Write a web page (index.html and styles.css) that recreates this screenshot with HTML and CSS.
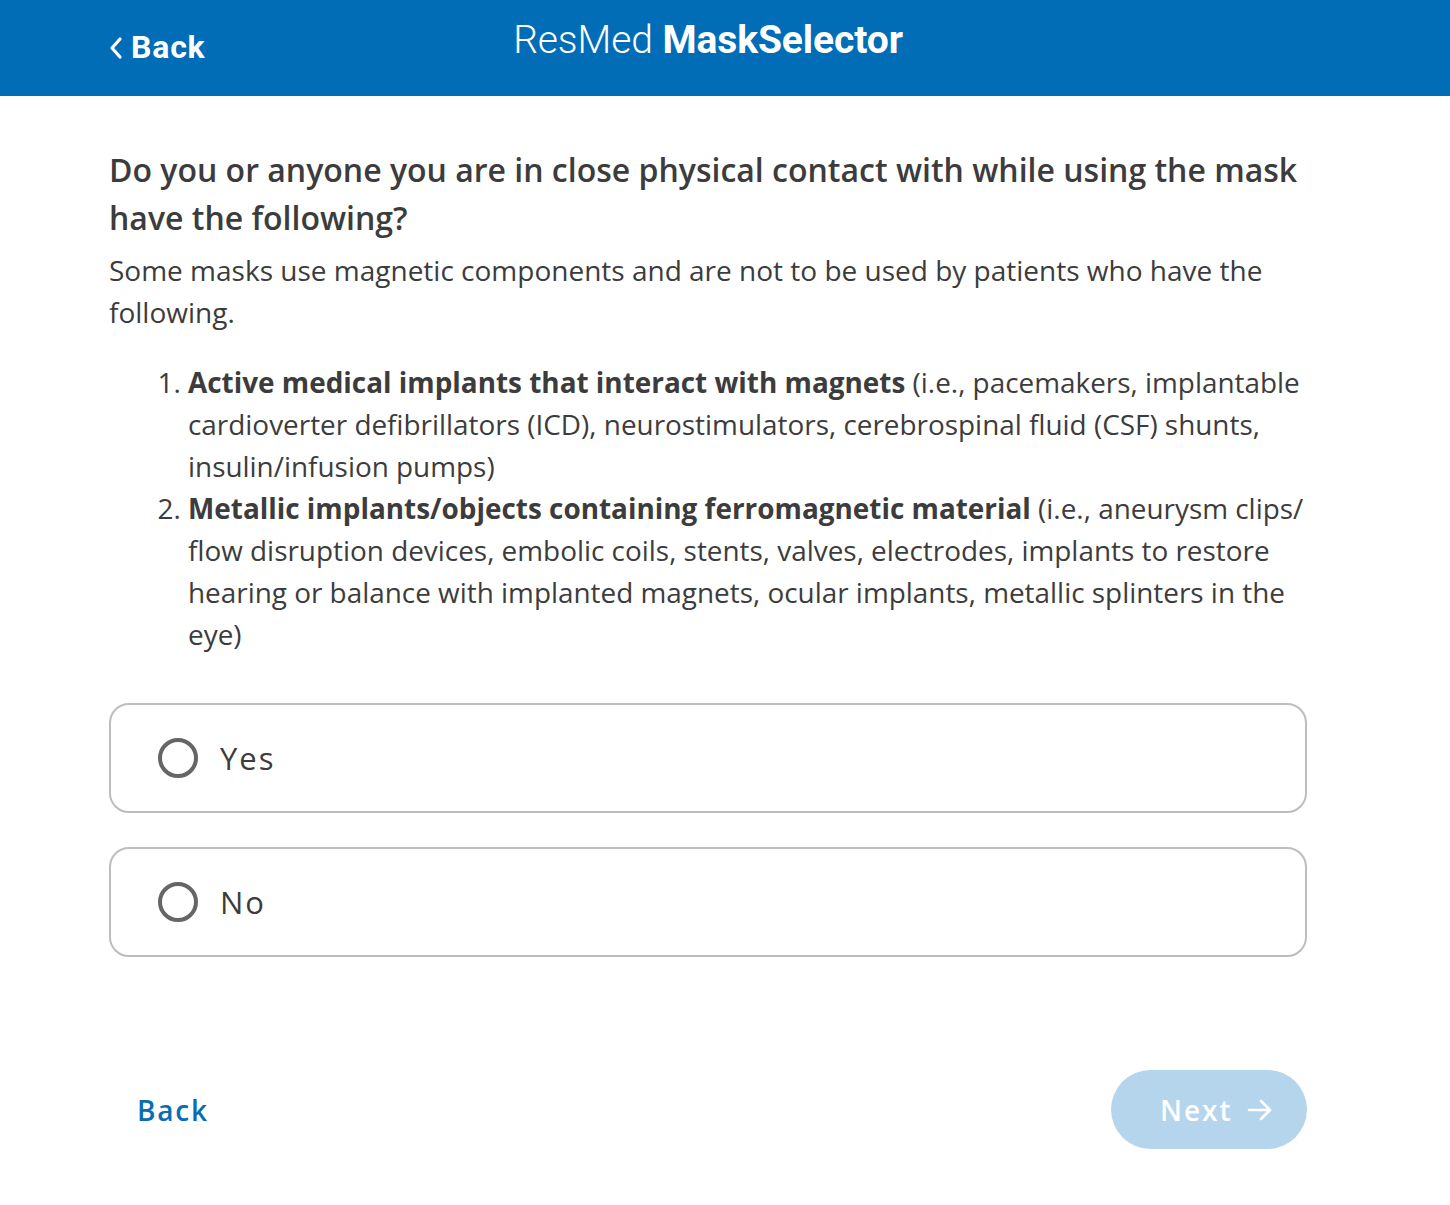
FILE: index.html
```html
<!DOCTYPE html>
<html lang="en">
<head>
<meta charset="utf-8">
<title>ResMed MaskSelector</title>
<link rel="stylesheet" href="styles.css">
</head>
<body>
<header class="topbar">
  <div class="topbar-inner">
    <a class="top-back" href="#">
      <svg class="chev" width="14" height="24" viewBox="0 0 14 24"><path d="M11 3 L3 12 L11 21" fill="none" stroke="#fff" stroke-width="3.2" stroke-linecap="round" stroke-linejoin="round"/></svg>
      <span>Back</span>
    </a>
    <div class="brand"><span class="brand-light">ResMed</span> <span class="brand-bold">MaskSelector</span></div>
  </div>
</header>
<main class="content">
  <h1 class="question">Do you or anyone you are in close physical contact with while using the mask have the following?</h1>
  <p class="intro">Some masks use magnetic components and are not to be used by patients who have the following.</p>
  <ol class="conditions">
    <li><strong>Active medical implants that interact with magnets</strong> (i.e., pacemakers, implantable cardioverter defibrillators (ICD), neurostimulators, cerebrospinal fluid (CSF) shunts, insulin/infusion pumps)</li>
    <li><strong>Metallic implants/objects containing ferromagnetic material</strong> (i.e., aneurysm clips/ flow disruption devices, embolic coils, stents, valves, electrodes, implants to restore hearing or balance with implanted magnets, ocular implants, metallic splinters in the eye)</li>
  </ol>
  <div class="options">
    <label class="option"><span class="radio"></span><span class="opt-label">Yes</span></label>
    <label class="option"><span class="radio"></span><span class="opt-label">No</span></label>
  </div>
  <div class="nav">
    <a class="nav-back" href="#">Back</a>
    <button class="next" type="button">Next
      <svg width="26" height="22" viewBox="0 0 26 22"><path d="M2 11 H23 M14 2 L23 11 L14 20" fill="none" stroke="#fff" stroke-width="2.6" stroke-linecap="round" stroke-linejoin="round"/></svg>
    </button>
  </div>
</main>
</body>
</html>
```
FILE: styles.css
```css
* { box-sizing: border-box; }
body {
  margin: 0;
  background: #fff;
  font-family: "Open Sans", "Noto Sans", sans-serif;
  color: #3c3c3c;
}
.topbar {
  background: #006db6;
  height: 96px;
}
.topbar-inner {
  width: 1198px;
  margin-left: 109px;
  height: 96px;
  position: relative;
  display: flex;
  align-items: center;
  justify-content: center;
}
.top-back {
  position: absolute;
  left: 0;
  top: 29px;
  display: flex;
  align-items: center;
  gap: 8px;
  color: #fff;
  text-decoration: none;
  font-family: Roboto, sans-serif;
  font-weight: 700;
  font-size: 32px;
  line-height: 36px;
  letter-spacing: 0.8px;
}
.chev { display: block; margin-top: 1px; }
.brand {
  color: #fff;
  font-family: Roboto, sans-serif;
  font-size: 39px;
  line-height: 40px;
  margin-top: -16px;
  letter-spacing: -0.1px;
}
.brand-light { font-weight: 300; }
.brand-bold { font-weight: 700; }
.content {
  width: 1198px;
  margin-left: 109px;
  padding-top: 50px;
}
.question {
  margin: 0;
  font-size: 32px;
  line-height: 48px;
  font-weight: 600;
  color: #3c3c3c;
}
.intro {
  margin: 7px 0 0;
  font-size: 28px;
  line-height: 42px;
}
.conditions {
  margin: 28px 0 0;
  padding-left: 79px;
  font-size: 27.9px;
  line-height: 42px;
}
.conditions strong { font-weight: 700; }
.options {
  margin-top: 48px;
  display: flex;
  flex-direction: column;
  gap: 34px;
}
.option {
  height: 110px;
  border: 2px solid #bdbdbd;
  border-radius: 20px;
  display: flex;
  align-items: center;
  padding-left: 47px;
}
.radio {
  width: 40px;
  height: 40px;
  border: 4px solid #666;
  border-radius: 50%;
  flex: none;
}
.opt-label {
  margin-left: 22px;
  font-size: 31px;
  letter-spacing: 2px;
  color: #3c3c3c;
}
.nav {
  margin-top: 113px;
  display: flex;
  justify-content: space-between;
  align-items: center;
}
.nav-back {
  margin-left: 28px;
  color: #0a6db4;
  font-size: 28px;
  font-weight: 600;
  letter-spacing: 1.8px;
  text-decoration: none;
}
.next {
  width: 196px;
  height: 79px;
  border: none;
  border-radius: 40px;
  background: #b4d5eb;
  color: #fff;
  font-family: "Open Sans", sans-serif;
  font-size: 28px;
  font-weight: 600;
  letter-spacing: 2px;
  display: flex;
  align-items: center;
  justify-content: flex-start;
  gap: 14px;
  padding: 0 0 0 49px;
}
.next svg { display: block; }
```
